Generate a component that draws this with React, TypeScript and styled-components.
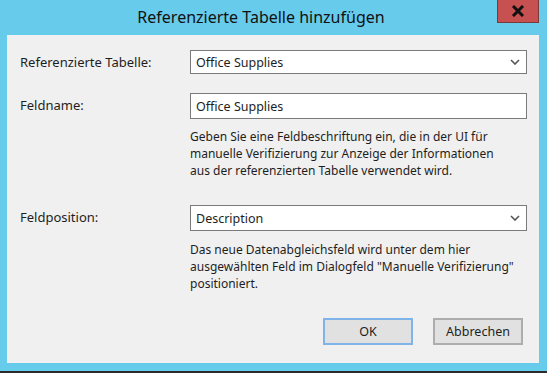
import React from "react";
import styled, { createGlobalStyle } from "styled-components";

const Global = createGlobalStyle`
  html, body { margin: 0; padding: 0; }
  body { background: #2b2b2b; font-family: "Noto Sans", "Liberation Sans", sans-serif; }
`;

const Window = styled.div`
  width: 547px;
  height: 371px;
  background: #67cbec;
  display: flex;
  flex-direction: column;
  box-sizing: border-box;
  padding: 0 8px 8px 7px;
`;

const TitleBar = styled.div`
  height: 35px;
  position: relative;
  display: flex;
  align-items: center;
  justify-content: center;
  font-size: 16px;
  color: #111;
  padding: 0 24px 1px 0;
  box-sizing: border-box;
`;

const CloseButton = styled.div`
  position: absolute;
  right: 0;
  top: 0;
  width: 42px;
  height: 23px;
  background: #c75050;
  border: 1px solid #7a3a3a;
  border-top: none;
  box-sizing: border-box;
  display: flex;
  align-items: center;
  justify-content: center;
`;

const Content = styled.div`
  flex: 1;
  background: #f0f0f0;
  padding: 15px 12px 0 13px;
  box-sizing: border-box;
  display: flex;
  flex-direction: column;
  font-size: 12px;
  color: #1e1e1e;
`;

const Row = styled.div<{ $mt?: number }>`
  display: grid;
  grid-template-columns: 170px 337px;
  margin-top: ${(p) => p.$mt ?? 0}px;
`;

const Label = styled.div`
  height: 24px;
  line-height: 24px;
  font-size: 13px;
`;

const Field = styled.div<{ $h?: number }>`
  height: ${(p) => p.$h ?? 24}px;
  background: #fff;
  border: 1px solid #7a7a7a;
  box-sizing: border-box;
  display: flex;
  align-items: center;
  padding-left: 5px;
  padding-right: 6px;
  justify-content: space-between;
  font-size: 12.5px;
`;

const Help = styled.div<{ $pt: number }>`
  grid-column: 2;
  line-height: 17px;
  padding-top: ${(p) => p.$pt}px;
`;

const Buttons = styled.div`
  display: flex;
  justify-content: flex-end;
  gap: 20px;
  margin-top: 26px;
  padding-right: 4px;
`;

const Button = styled.div<{ $default?: boolean }>`
  width: 90px;
  height: 27px;
  box-sizing: border-box;
  background: #e1e1e1;
  border: ${(p) => (p.$default ? "2px solid #7eb4ea" : "2px solid #adadad")};
  display: flex;
  align-items: center;
  justify-content: center;
  font-size: 12.5px;
  color: #1e1e1e;
`;

const Chevron = () => (
  <svg width="10" height="6" viewBox="0 0 10 6">
    <path d="M1 1 L5 5 L9 1" fill="none" stroke="#555" strokeWidth="1.6" />
  </svg>
);

export default function App() {
  return (
    <>
      <Global />
      <Window>
        <TitleBar>
          Referenzierte Tabelle hinzufügen
          <CloseButton>
            <svg width="14" height="12" viewBox="0 0 14 12">
              <path d="M2 1 L12 11 M12 1 L2 11" stroke="#111" strokeWidth="3" />
            </svg>
          </CloseButton>
        </TitleBar>
        <Content>
          <Row>
            <Label>Referenzierte Tabelle:</Label>
            <Field>
              Office Supplies
              <Chevron />
            </Field>
          </Row>
          <Row $mt={19}>
            <Label>Feldname:</Label>
            <Field $h={26}>Office Supplies</Field>
          </Row>
          <Row>
            <Help $pt={9}>
              Geben Sie eine Feldbeschriftung ein, die in der UI für
              <br />
              manuelle Verifizierung zur Anzeige der Informationen
              <br />
              aus der referenzierten Tabelle verwendet wird.
            </Help>
          </Row>
          <Row $mt={26}>
            <Label>Feldposition:</Label>
            <Field $h={26}>
              Description
              <Chevron />
            </Field>
          </Row>
          <Row>
            <Help $pt={10}>
              Das neue Datenabgleichsfeld wird unter dem hier
              <br />
              ausgewählten Feld im Dialogfeld "Manuelle Verifizierung"
              <br />
              positioniert.
            </Help>
          </Row>
          <Buttons>
            <Button $default>OK</Button>
            <Button>Abbrechen</Button>
          </Buttons>
        </Content>
      </Window>
    </>
  );
}
